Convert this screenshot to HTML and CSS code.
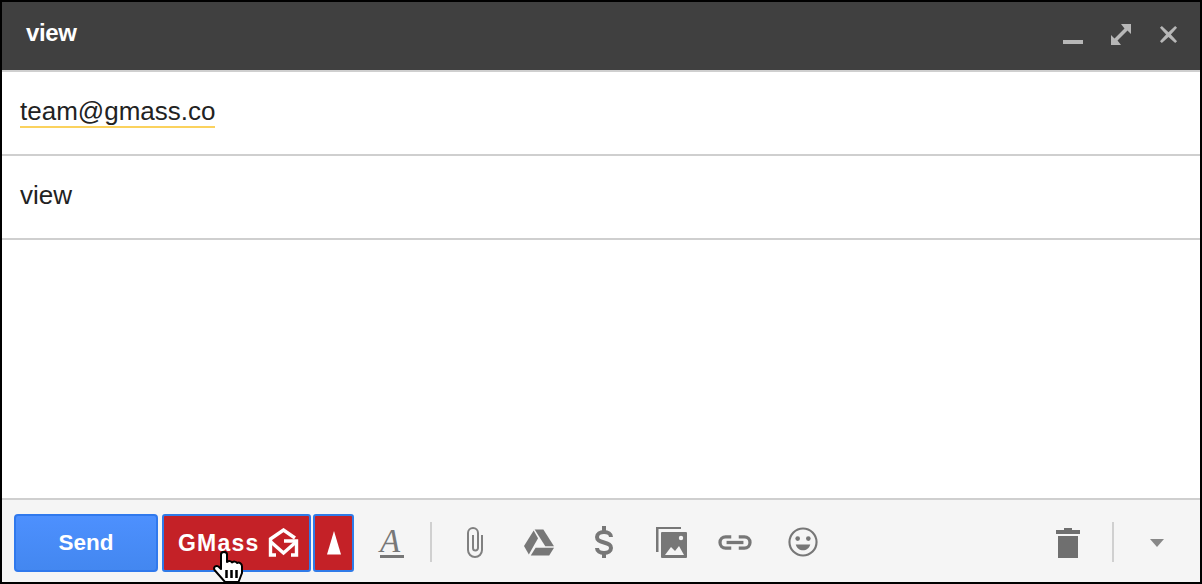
FILE: index.html
```html
<!DOCTYPE html>
<html lang="en">
<head>
  <meta charset="UTF-8">
  <title>view</title>
  <link rel="stylesheet" href="styles.css">
</head>
<body>
  <div class="compose">
    <div class="header">
      <span class="header-title">view</span>
      <div class="header-icons">
        <svg class="win-min" width="20" height="4" viewBox="0 0 20 4"><rect width="20" height="4" fill="#b7b7b7"/></svg>
        <svg width="20" height="21" viewBox="0 0 20 21" fill="#b7b7b7">
          <path d="M10 0h10v10l-3.500-3.500-10 10L10 21H0V11l3.500 3.500 10-10z"/>
        </svg>
        <svg width="19" height="19" viewBox="0 0 20 20"><path d="M3 1l7 6.500L17 1l2 2-6.500 7L19 17l-2 2-7-6.500L3 19l-2-2 6.500-7L1 3z" fill="#b7b7b7"/></svg>
      </div>
    </div>
    <div class="row">
      <span class="recipient">team@gmass.co</span>
    </div>
    <div class="row">
      <span>view</span>
    </div>
    <div class="body"></div>
    <div class="footer">
      <button class="btn-send">Send</button>
      <div class="gmass-group">
        <button class="btn-gmass">
          <span>GMass</span>
          <svg width="31" height="30" viewBox="0 0 31 30" fill="none" stroke="#fff" stroke-width="3.400">
            <path d="M8 27H2.500V11L15.500 2 27 10"/>
            <path d="M16 13h12.500v14H23"/>
            <path d="M3 14l12.500 11L28 14"/>
          </svg>
        </button>
        <button class="btn-gmass-arrow">
          <svg width="16" height="24" viewBox="0 0 16 24"><path d="M8 0l7 23.500H1z" fill="#fff"/></svg>
        </button>
        <svg class="cursor" width="31" height="31" viewBox="0 0 31 31">
          <path d="M8 3.500c0-3.500 6-3.500 6 0V11c2-1.500 4-1 5 .5 2-1.500 4-1 5 .5 2-1 5 0 5 3.500V22l-3.500 9H12L1.500 19c-1.500-3 1.500-5 4-3.500L8 18z" fill="#fff" stroke="#000" stroke-width="2" stroke-linejoin="round"/>
          <path d="M13.500 19v8M18.500 19v8M23.500 19v8" stroke="#000" stroke-width="2.500" fill="none"/>
        </svg>
      </div>
      <div class="tools">
        <span class="tool-format">A</span>
        <span class="sep sep-a"></span>
        <svg class="tool-clip" width="18" height="33" viewBox="0 0 18 33" fill="none" stroke="#808080" stroke-width="2">
          <path d="M17 9v15a7 7 0 0 1-14 0V7a5 5 0 0 1 10 0v15a2.500 2.500 0 0 1-5 0V9"/>
        </svg>
        <svg class="tool-drive" width="30" height="27" viewBox="0 0 31 27" fill="#777">
          <path d="M11 0h9l11 17.500h-9z"/>
          <path d="M10 1l4.500 8L5 26 0 17z"/>
          <path d="M12 19h19l-5 8H7z"/>
        </svg>
        <svg class="tool-dollar" width="20" height="32" viewBox="0 0 20 32" fill="none" stroke="#777" stroke-width="4">
          <path d="M17 11c0-3-3-5-7-5s-7 2-7 5 2 4 7 5.500 7 2.500 7 5.500-3 5-7 5-7-2-7-5"/>
          <path d="M10 0v6M10 26v6"/>
        </svg>
        <svg class="tool-photo" width="31" height="31" viewBox="0 0 31 31">
          <path d="M0 0h25v2H2.500v23H0z" fill="#777"/>
          <rect x="5" y="5" width="26" height="26" rx="1" fill="#777"/>
          <path d="M9 28l6-8 4 4 4-5 5 9z" fill="#f5f5f5"/>
          <circle cx="25" cy="11" r="2.200" fill="#f5f5f5"/>
        </svg>
        <svg class="tool-link" width="36" height="15" viewBox="0 0 36 16" fill="none" stroke="#777" stroke-width="3.500">
          <path d="M14 2H8a6 6 0 0 0 0 12h6"/>
          <path d="M22 2h6a6 6 0 0 1 0 12h-6"/>
          <path d="M9 8h18"/>
        </svg>
        <svg class="tool-smile" width="30" height="30" viewBox="0 0 31 31">
          <circle cx="15.500" cy="15.500" r="14" fill="none" stroke="#777" stroke-width="2.200"/>
          <circle cx="10" cy="12" r="2.400" fill="#777"/>
          <circle cx="21" cy="12" r="2.400" fill="#777"/>
          <path d="M8 18h15c-1 4-4 6-7.500 6S9 22 8 18z" fill="#777"/>
        </svg>
      </div>
      <div class="tools-right">
        <svg width="24" height="30" viewBox="0 0 24 30" fill="#6f6f6f">
          <path d="M8 0h8v2h8v4H0V2h8z"/>
          <rect x="2" y="8" width="20" height="22"/>
        </svg>
        <span class="sep sep-b"></span>
        <svg class="more" width="14" height="8" viewBox="0 0 14 8"><path d="M0 0h14L7 8z" fill="#888"/></svg>
      </div>
    </div>
  </div>
</body>
</html>
```

FILE: styles.css
```css
* {
  box-sizing: border-box;
}

html, body {
  height: 100%;
}

body {
  margin: 0;
  font-family: "Liberation Sans", Arial, sans-serif;
  background-color: #000000;
  overflow: hidden;
}

.compose {
  display: flex;
  flex-direction: column;
  height: 584px;
  border: 2px solid #000000;
  background-color: #ffffff;
}

.header {
  display: flex;
  align-items: center;
  justify-content: space-between;
  height: 70px;
  flex-shrink: 0;
  padding: 0 22px 0 24px;
  background-color: #404040;
  border-bottom: 2px solid #cfcfcf;
}

.header-title {
  color: #ffffff;
  font-size: 24px;
  font-weight: bold;
  letter-spacing: -0.4px;
  padding-bottom: 6px;
}

.header-icons {
  display: flex;
  align-items: center;
  gap: 28px;
  padding-bottom: 4px;
}

.win-min {
  margin-top: 16px;
}

.row {
  display: flex;
  align-items: center;
  height: 84px;
  flex-shrink: 0;
  padding: 0 18px 4px;
  color: #222222;
  font-size: 26px;
  border-bottom: 2px solid #cfcfcf;
}

.recipient {
  margin-top: 2px;
  border-bottom: 2px solid #fbd25e;
  line-height: 29px;
}

.body {
  flex-grow: 1;
}

.footer {
  position: relative;
  display: flex;
  align-items: center;
  height: 84px;
  flex-shrink: 0;
  padding: 4px 0 0 12px;
  background-color: #f5f5f5;
  border-top: 2px solid #cfcfcf;
}

button {
  height: 58px;
  border-radius: 4px;
  color: #ffffff;
  font-family: inherit;
  font-weight: bold;
  padding: 0;
}

.btn-send {
  width: 144px;
  font-size: 22.5px;
  background: linear-gradient(#4d90fe, #4387f0);
  border: 2px solid #3079ed;
}

.gmass-group {
  position: relative;
  display: flex;
  margin-left: 4px;
  gap: 2px;
}

.btn-gmass,
.btn-gmass-arrow {
  display: flex;
  align-items: center;
  background-color: #c42127;
  border: 2px solid #2f7be8;
  border-radius: 3px;
}

.btn-gmass {
  width: 149px;
  gap: 9px;
  padding-left: 14px;
  font-size: 23px;
  letter-spacing: 1.2px;
}

.btn-gmass-arrow {
  width: 41px;
  justify-content: center;
}

.cursor {
  position: absolute;
  left: 51px;
  top: 37px;
}

.tools {
  display: flex;
  align-items: center;
  margin-left: 26px;
  margin-bottom: 2px;
}

.tool-format {
  display: block;
  width: 24px;
  height: 31px;
  color: #777777;
  font-family: "Liberation Serif", serif;
  font-size: 33px;
  font-style: italic;
  line-height: 28px;
  border-bottom: 3px solid #777777;
}

.sep {
  width: 2px;
  height: 40px;
  background-color: #d0d0d0;
}

.sep-a {
  margin: 0 33px 0 26px;
}

.sep-b {
  margin-bottom: 2px;
}

.tool-clip {
  margin-right: 41px;
}

.tool-drive {
  margin-right: 40px;
}

.tool-dollar {
  margin-right: 42px;
}

.tool-photo {
  margin-right: 30px;
}

.tool-link {
  margin-right: 35px;
}

.tools-right {
  display: flex;
  align-items: center;
  gap: 32px;
  margin-left: auto;
  padding-right: 36px;
}

.more {
  margin-left: 4px;
}
```
